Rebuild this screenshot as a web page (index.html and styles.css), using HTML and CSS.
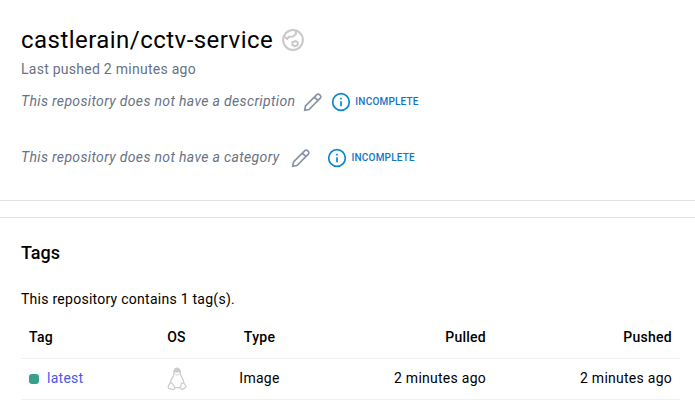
FILE: index.html
```html
<!DOCTYPE html>
<html lang="en">
<head>
<meta charset="utf-8">
<title>castlerain/cctv-service</title>
<link rel="stylesheet" href="styles.css">
</head>
<body>
<svg class="sprite" aria-hidden="true">
  <symbol id="pencil" viewBox="0 0 20 20">
    <path d="M1.7 18.3 2.5 14 13.8 2.7a1.9 1.9 0 0 1 2.7 0l.8.8a1.9 1.9 0 0 1 0 2.7L6 17.5ZM11.4 5.1l3.5 3.5"/>
  </symbol>
  <symbol id="info" viewBox="0 0 20 20">
    <circle cx="10" cy="10" r="8.3"/>
    <path d="M10 9.2v5M10 5.8v1.8"/>
  </symbol>
</svg>
<header class="repo">
  <div class="title-row">
    <h1 class="title">castlerain/cctv-service</h1>
    <svg class="globe" viewBox="0 0 22 22">
      <circle cx="11" cy="11" r="9.9"/>
      <path d="M2.5 7.7 5.2 9.8 7.2 7.7 11 7.5 14 4.8 13.5 1.7M10.3 13.2l3.3-1.2 2.2 1.3-.3 2.8-2.6 1.3-2.5-1.5Z"/>
    </svg>
  </div>
  <p class="pushed">Last pushed 2 minutes ago</p>
  <div class="meta description">
    <em class="meta-text">This repository does not have a description</em>
    <svg class="pencil"><use href="#pencil"/></svg>
    <svg class="info"><use href="#info"/></svg>
    <span class="status">INCOMPLETE</span>
  </div>
  <div class="meta category">
    <em class="meta-text">This repository does not have a category</em>
    <svg class="pencil"><use href="#pencil"/></svg>
    <svg class="info"><use href="#info"/></svg>
    <span class="status">INCOMPLETE</span>
  </div>
</header>
<main class="tags">
  <h2 class="heading">Tags</h2>
  <p class="summary">This repository contains 1 tag(s).</p>
  <div class="table">
    <div class="row head">
      <span>Tag</span><span class="center">OS</span><span class="center">Type</span><span class="right">Pulled</span><span class="right">Pushed</span>
    </div>
    <div class="row">
      <span class="tag"><i class="dot"></i><a class="link">latest</a></span>
      <span class="center">
        <svg class="linux" viewBox="0 0 20 24">
          <path class="body" d="M7 7C6.8 3.5 7.3 1.2 10 1.2s3.4 2.3 3.3 5.4c.2 2.8 3.5 5.2 3.6 9.4l-2.7 4.6H5.8L3.1 16C3.2 12 7 10 7 7Z"/>
          <path class="crown" d="M6.8 6C6.6 2.4 8 1 10 1s3.4 1.4 3.4 5l-1.6-.8-1.8.6-1.6-.6Z"/>
          <path class="detail" d="m8.2 7.2 1.9 1 1.9-1"/>
          <path class="foot" d="m3.4 15.8 1.5.2 2.7 3.9c.8 1.8-.6 2.8-2.3 2.5l-3.5-.9c-1.1-.4-.4-1.4-.5-2.4-.2-1.4 1.3-1 2.1-3.3ZM16.6 15.8l-2.3.6-.7 4.5c-.1 1.6 1.8 1.9 2.8.8l2.3-1.5c1-.7.2-1.2-.5-2.1Z"/>
        </svg>
      </span>
      <span class="center">Image</span><span class="right">2 minutes ago</span><span class="right">2 minutes ago</span>
    </div>
  </div>
</main>
</body>
</html>
```
FILE: styles.css
```css
* { box-sizing: border-box; }
body {
  margin: 0;
  background: #fff;
  color: #000;
  font: 14px/20px Roboto, "Liberation Sans", sans-serif;
  letter-spacing: 0.26px;
  overflow: hidden;
}
h1, h2, p { margin: 0; }
svg { flex: none; fill: none; }
.sprite { display: none; }
.repo {
  height: 201px;
  padding: 24px 21px 0;
  border-bottom: 1px solid #e1e2e6;
}
.title-row { display: flex; align-items: center; height: 32px; }
.title { font-size: 24px; line-height: 32px; font-weight: 400; letter-spacing: 0.46px; }
.globe { width: 22px; height: 22px; margin-left: 9px; stroke: #c9c9c9; stroke-width: 2; }
.pushed { margin-top: 3px; color: #677285; }
.meta { display: flex; align-items: center; height: 22px; margin-top: 12px; color: #677285; }
.category { margin-top: 34px; }
.meta-text { white-space: nowrap; margin-bottom: 2px; letter-spacing: 0.34px; }
.pencil { width: 20px; height: 20px; margin-left: 8px; stroke: #8993a5; stroke-width: 1.7; }
.info { width: 20px; height: 20px; margin-left: 8px; stroke: #0c86d0; stroke-width: 1.7; }
.category .pencil { margin-left: 12px; }
.category .info { margin-left: 16px; }
.status { margin-left: 4px; font-size: 10px; font-weight: 500; letter-spacing: 0.2px; color: #1474c4; }
.tags {
  height: 202px;
  margin-top: 16px;
  padding: 23px 15px 0 21px;
  border-top: 1px solid #e1e2e6;
}
.heading { font-size: 18px; line-height: 24px; font-weight: 500; letter-spacing: 0; }
.summary { margin-top: 24px; }
.table { margin-top: 8px; }
.row {
  display: grid;
  grid-template-columns: 128px 55px 111px 179px 186px;
  align-items: center;
  height: 41px;
  padding-bottom: 2px;
  border-bottom: 1px solid #f2f2f2;
}
.row > span { padding: 0 8px; }
.head { height: 42px; font-weight: 500; }
.center { text-align: center; }
.right { text-align: right; }
.tag { display: flex; align-items: center; }
.dot { width: 10px; height: 10px; margin: 2px 8px 0 0; border-radius: 3px; background: #3aa08c; }
.link { color: #4a58e8; }
.linux { display: block; width: 20px; height: 24px; margin: 2px auto 0; }
.body { fill: #fff; stroke: #ccc; stroke-width: 1.3; }
.crown { fill: #ccc; }
.detail { stroke: #c8c8c8; stroke-width: 0.9; }
.foot { fill: #fff; stroke: #c8c8c8; stroke-width: 1.1; }
```
